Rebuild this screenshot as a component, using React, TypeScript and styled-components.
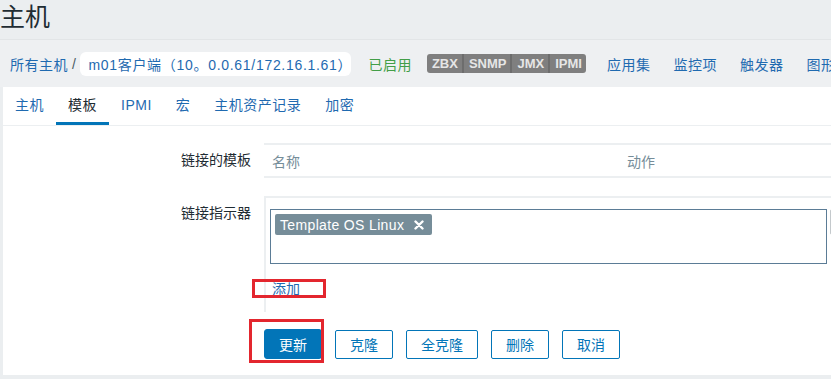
import styled, { createGlobalStyle, css } from 'styled-components';

const GlobalStyle = createGlobalStyle`
  html, body {
    margin: 0;
    padding: 0;
  }
  body {
    background: #ebeef0;
    font-family: "Liberation Sans", "Noto Sans CJK SC", sans-serif;
    font-size: 14px;
    color: #1f2c33;
    overflow: hidden;
  }
`;

const LINK = '#1f6ab0';
const PRIMARY = '#0275b8';
const LINE = '#eceff1';

const Page = styled.div`
  width: 831px;
  height: 379px;
  overflow: hidden;
  background: #ebeef0;
`;

const Title = styled.h1`
  margin: 0;
  height: 39px;
  font-size: 25px;
  font-weight: 400;
  line-height: 34px;
  color: #1f2c33;
`;

const NavBar = styled.nav`
  display: flex;
  align-items: center;
  height: 47px;
  padding-left: 10px;
  border-top: 1px solid #e2e5e7;
  background: #eef0f2;
  white-space: nowrap;
  letter-spacing: 0.5px;

  & > * {
    flex: none;
  }
`;

const Crumb = styled.a`
  color: ${LINK};
  text-decoration: none;
`;

const Sep = styled.span`
  margin: 0 4px;
  color: #4b5a63;
`;

const Pill = styled.span`
  display: inline-flex;
  align-items: center;
  width: 271px;
  height: 24px;
  padding: 0 8px;
  box-sizing: border-box;
  border-radius: 6px;
  background: #fff;
  color: ${LINK};
  letter-spacing: 0.7px;
`;

const Status = styled.span`
  margin-left: 17px;
  color: #429e47;
`;

const Avail = styled.span`
  display: inline-flex;
  margin-left: 15px;
  height: 19px;
  border-radius: 3px;
  overflow: hidden;
  background: #7f7f7f;
  letter-spacing: 0;
`;

const AvailItem = styled.span`
  padding: 0 4px 0 5px;
  line-height: 19px;
  font-size: 13px;
  font-weight: 700;
  color: #e6e6e6;
  & + & {
    border-left: 2px solid #6d6d6d;
  }
`;

const NavLink = styled.a<{ $first?: boolean }>`
  margin-left: ${({ $first }) => ($first ? '21px' : '23px')};
  color: ${LINK};
  text-decoration: none;
`;

const Panel = styled.section`
  margin-left: 3px;
  height: 288px;
  background: #fff;
  overflow: hidden;
`;

const TabBar = styled.div`
  display: flex;
  height: 38px;
  border-bottom: 1px solid ${LINE};
  letter-spacing: 0.5px;
`;

const Tab = styled.a<{ $active?: boolean }>`
  padding: 0 12px;
  height: 35px;
  line-height: 37px;
  border-bottom: 3px solid transparent;
  color: ${LINK};
  text-decoration: none;
  ${({ $active }) =>
    $active &&
    css`
      color: #1f2c33;
      border-bottom-color: ${PRIMARY};
    `}
`;

const Form = styled.div`
  padding-top: 17px;
`;

const FormRow = styled.div`
  display: grid;
  grid-template-columns: 248px 700px;
  column-gap: 13px;
  margin-bottom: 18px;
`;

const Label = styled.label`
  padding-top: 8px;
  line-height: 18px;
  text-align: right;
  color: #1f2c33;
`;

const Table = styled.div`
  display: flex;
  align-items: center;
  height: 31px;
  border-top: 2px solid ${LINE};
  border-bottom: 2px solid ${LINE};
`;

const HeadCell = styled.span<{ $w?: number }>`
  box-sizing: border-box;
  padding-left: 8px;
  width: ${({ $w }) => ($w ? `${$w}px` : 'auto')};
  color: #768d99;
`;

const FieldBox = styled.div`
  padding: 11px 0 14px 4px;
  border-top: 2px solid ${LINE};
  border-left: 2px solid ${LINE};
`;

const MultiRow = styled.div`
  display: flex;
  align-items: flex-start;
`;

const MultiSelect = styled.div`
  width: 557px;
  height: 55px;
  box-sizing: border-box;
  padding: 4px;
  border: 1px solid #5b7c96;
`;

const Chip = styled.span`
  display: inline-flex;
  align-items: center;
  gap: 10px;
  height: 21px;
  padding: 0 8px 0 5px;
  border-radius: 2px;
  background: #768d99;
  color: #fff;
  letter-spacing: 0.35px;
`;

const SelectBtn = styled.button`
  flex: none;
  margin-left: 3px;
  width: 60px;
  height: 26px;
  padding: 0;
  border: 1px solid #c4c9cc;
  border-radius: 2px;
  background: #e9ebec;
`;

const Marked = styled.span<{ $l: number; $r: number; $t: number; $b: number }>`
  position: relative;
  display: inline-block;
  &::after {
    content: '';
    position: absolute;
    left: ${({ $l }) => $l}px;
    right: ${({ $r }) => $r}px;
    top: ${({ $t }) => $t}px;
    bottom: ${({ $b }) => $b}px;
    border: 3px solid #e3262e;
    pointer-events: none;
  }
`;

const AddWrap = styled.div`
  margin-top: 16px;
  height: 18px;
`;

const AddLink = styled.a`
  display: inline-block;
  padding-left: 2px;
  line-height: 18px;
  color: ${LINK};
  text-decoration: none;
`;

const Buttons = styled.div`
  display: flex;
  align-items: center;
  gap: 13px;
  padding-left: 261px;
  margin-top: -1px;
`;

const Button = styled.button<{ $primary?: boolean }>`
  height: 29px;
  padding: 0 14px;
  border: 1px solid ${PRIMARY};
  border-radius: 2px;
  background: #fff;
  font: inherit;
  color: ${PRIMARY};
  ${({ $primary }) =>
    $primary &&
    css`
      height: 30px;
      width: 58px;
      border-radius: 3px;
      background: ${PRIMARY};
      color: #fff;
    `}
`;

function CloseIcon() {
  return (
    <svg width="10" height="10" viewBox="0 0 10 10">
      <path d="M1.5 1.5 L8.5 8.5 M8.5 1.5 L1.5 8.5" stroke="#fff" strokeWidth="2.4" strokeLinecap="round" />
    </svg>
  );
}

const tabs = ['主机', '模板', 'IPMI', '宏', '主机资产记录', '加密'];
const navLinks = ['应用集', '监控项', '触发器', '图形'];

export default function App() {
  return (
    <Page>
      <GlobalStyle />
      <Title>主机</Title>
      <NavBar>
        <Crumb>所有主机</Crumb>
        <Sep>/</Sep>
        <Pill>m01客户端（10。0.0.61/172.16.1.61）</Pill>
        <Status>已启用</Status>
        <Avail>
          {['ZBX', 'SNMP', 'JMX', 'IPMI'].map((t) => (
            <AvailItem key={t}>{t}</AvailItem>
          ))}
        </Avail>
        {navLinks.map((l, i) => (
          <NavLink key={l} $first={i === 0}>
            {l}
          </NavLink>
        ))}
      </NavBar>
      <Panel>
        <TabBar>
          {tabs.map((t) => (
            <Tab key={t} $active={t === '模板'}>
              {t}
            </Tab>
          ))}
        </TabBar>
        <Form>
          <FormRow>
            <Label>链接的模板</Label>
            <Table>
              <HeadCell $w={355}>名称</HeadCell>
              <HeadCell>动作</HeadCell>
            </Table>
          </FormRow>
          <FormRow>
            <Label>链接指示器</Label>
            <FieldBox>
              <MultiRow>
                <MultiSelect>
                  <Chip>
                    Template OS Linux
                    <CloseIcon />
                  </Chip>
                </MultiSelect>
                <SelectBtn aria-label="选择" />
              </MultiRow>
              <AddWrap>
                <Marked $l={-18} $r={-26} $t={-1} $b={0}>
                  <AddLink>添加</AddLink>
                </Marked>
              </AddWrap>
            </FieldBox>
          </FormRow>
          <Buttons>
            <Marked $l={-15} $r={-2} $t={-10} $b={-4}>
              <Button $primary>更新</Button>
            </Marked>
            <Button>克隆</Button>
            <Button>全克隆</Button>
            <Button>删除</Button>
            <Button>取消</Button>
          </Buttons>
        </Form>
      </Panel>
    </Page>
  );
}
